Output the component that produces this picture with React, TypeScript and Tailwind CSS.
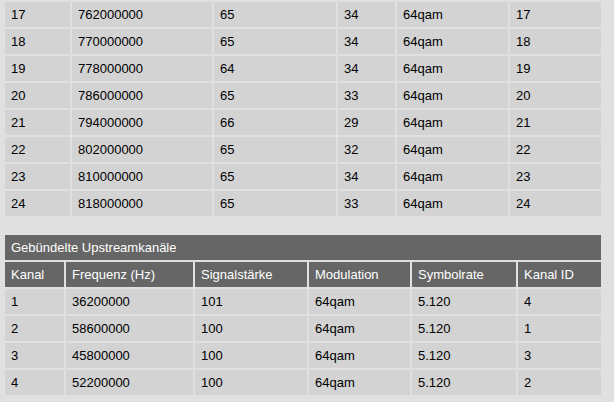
import React from 'react';

type Row = string[];

const downRows: Row[] = [
  ['17', '762000000', '65', '34', '64qam', '17'],
  ['18', '770000000', '65', '34', '64qam', '18'],
  ['19', '778000000', '64', '34', '64qam', '19'],
  ['20', '786000000', '65', '33', '64qam', '20'],
  ['21', '794000000', '66', '29', '64qam', '21'],
  ['22', '802000000', '65', '32', '64qam', '22'],
  ['23', '810000000', '65', '34', '64qam', '23'],
  ['24', '818000000', '65', '33', '64qam', '24'],
];

const upHead: Row = ['Kanal', 'Frequenz (Hz)', 'Signalstärke', 'Modulation', 'Symbolrate', 'Kanal ID'];

const upRows: Row[] = [
  ['1', '36200000', '101', '64qam', '5.120', '4'],
  ['2', '58600000', '100', '64qam', '5.120', '1'],
  ['3', '45800000', '100', '64qam', '5.120', '3'],
  ['4', '52200000', '100', '64qam', '5.120', '2'],
];

function Cell({ text, head }: { text: string; head?: boolean }): JSX.Element {
  return (
    <div
      className={`flex h-[25px] items-center px-[6px] whitespace-nowrap ${
        head ? 'bg-[#666666] text-white' : 'bg-[#d3d3d3] text-black'
      }`}
    >
      {text}
    </div>
  );
}

export default function App(): JSX.Element {
  return (
    <div
      className="min-h-[402px] w-[614px] bg-[#e0e0e0] pl-[5px] pt-[2px] text-[13px] leading-none"
      style={{ fontFamily: '"Liberation Sans", Arial, sans-serif' }}
    >
      {/* Downstream (Rest) */}
      <div className="grid w-[596px] grid-cols-[65px_140px_122px_57px_111px_91px] gap-[2px]">
        {downRows.map((row, r) =>
          row.map((c, i) => <Cell key={`d${r}-${i}`} text={c} />),
        )}
      </div>

      {/* Gebündelte Upstreamkanäle */}
      <div className="mt-[19px] grid w-[596px] grid-cols-[59px_127px_112px_101px_104px_83px] gap-[2px]">
        <div className="col-span-6 flex h-[25px] items-center bg-[#666666] px-[6px] text-white">
          Gebündelte Upstreamkanäle
        </div>
        {upHead.map((c, i) => (
          <Cell key={`h${i}`} text={c} head />
        ))}
        {upRows.map((row, r) =>
          row.map((c, i) => <Cell key={`u${r}-${i}`} text={c} />),
        )}
      </div>
    </div>
  );
}
